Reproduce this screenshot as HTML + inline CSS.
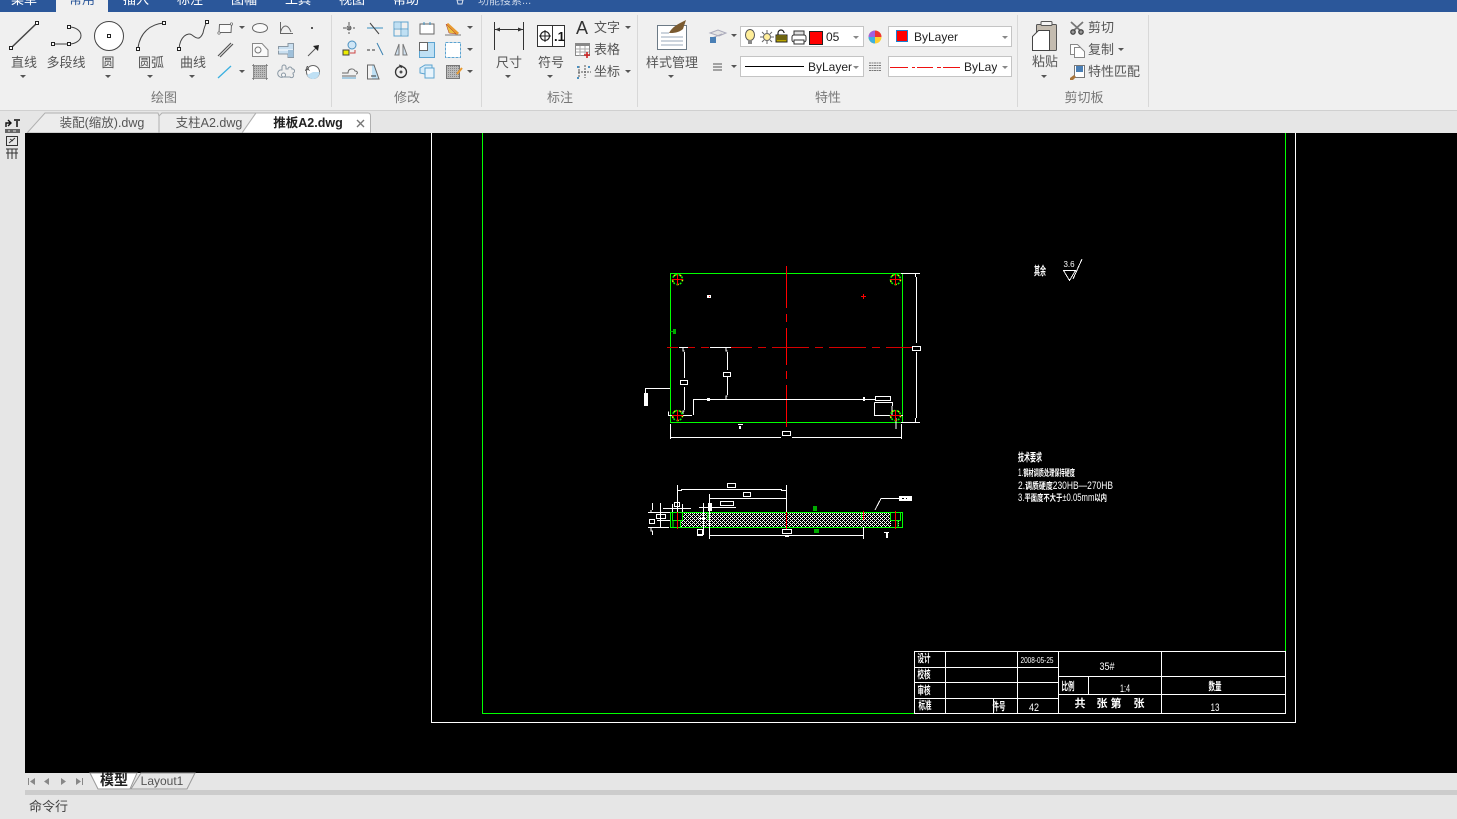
<!DOCTYPE html>
<html><head><meta charset="utf-8"><style>
html,body{margin:0;padding:0;background:#000;overflow:hidden}
svg{display:block}
text{font-family:"Liberation Sans","Noto Sans CJK SC",sans-serif}
.l{font-size:13px;fill:#555;text-anchor:middle}
.g{font-size:13px;fill:#777;text-anchor:middle}
.b{font-size:12px;fill:#222}
.m{font-size:13px;fill:#fff;text-anchor:middle}
.d{font-size:9px;fill:#fff;font-weight:bold;text-anchor:middle}
.t{font-size:9px;fill:#fff;text-anchor:middle}
.c line,.c path,.c rect.s{shape-rendering:crispEdges}
</style></head><body>
<svg width="1457" height="819" viewBox="0 0 1457 819" xmlns="http://www.w3.org/2000/svg">
<defs>
<pattern id="h" width="4" height="4" patternUnits="userSpaceOnUse"><rect width="4" height="4" fill="#000"/><path d="M0 3h1v1H0zM1 2h1v1H1zM2 1h1v1H2zM3 0h1v1H3zM0 1h1v1H0zM2 3h1v1H2z" fill="#fff"/></pattern>
<pattern id="gh" width="2" height="2" patternUnits="userSpaceOnUse"><rect width="2" height="2" fill="#bbb"/><rect width="1" height="1" fill="#888"/></pattern>
<path id="ar" d="M-3 0h6l-3 3z" fill="#555"/>
<rect id="q" x="-1.500" y="-1.500" width="3" height="3" fill="#fff" stroke="#222" stroke-width="1"/>
</defs>

<!-- base -->
<rect width="1457" height="819" fill="#e6e6e6"/>
<rect width="1457" height="12" fill="#2b579a"/>
<rect y="12" width="1457" height="98" fill="#f0f0f0"/>
<rect y="110" width="1457" height="1" fill="#d0d0d0"/>
<rect x="56" y="0" width="52" height="13" fill="#f0f0f0"/>
<!-- menu -->
<text class="m" x="24" y="4">菜单</text>
<text class="m" x="82" y="4" style="fill:#2b579a">常用</text>
<text class="m" x="136" y="4">插入</text>
<text class="m" x="190" y="4">标注</text>
<text class="m" x="244" y="4">图幅</text>
<text class="m" x="298" y="4">工具</text>
<text class="m" x="352" y="4">视图</text>
<text class="m" x="406" y="4">帮助</text>
<text x="478" y="4" style="font-size:11px;fill:#c5d2e6">功能搜索...</text>
<path d="M457 0h6l-1 4h-4z" fill="none" stroke="#dfe6f0"/>

<!-- separators -->
<g fill="#d8d8d8"><rect x="331" y="15" width="1" height="92"/><rect x="481" y="15" width="1" height="92"/><rect x="637" y="15" width="1" height="92"/><rect x="1017" y="15" width="1" height="92"/><rect x="1148" y="15" width="1" height="92"/></g>

<!-- DRAW group -->
<path d="M11 48L37 23" stroke="#444" stroke-width="1.500"/><use href="#q" x="11" y="48"/><use href="#q" x="37" y="23"/>
<path d="M53 44H69M69 27C76 27 81 31 81 35.500C81 40 76 44 69 44" fill="none" stroke="#444" stroke-width="1"/><use href="#q" x="53" y="44"/><use href="#q" x="69" y="44"/><use href="#q" x="69" y="27"/>
<circle cx="109" cy="36" r="14.500" fill="#fff" stroke="#444" stroke-width="1"/><use href="#q" x="109" y="36"/>
<path d="M138 48C140 33 150 24 164 23" fill="none" stroke="#444" stroke-width="1"/><use href="#q" x="138" y="49"/><use href="#q" x="164" y="23"/>
<path d="M179 49C180 36 188 32 192 35C197 39 200 40 203 33C204 28 205 25 207 22" fill="none" stroke="#444" stroke-width="1"/><use href="#q" x="179" y="49"/><use href="#q" x="207" y="22"/>
<text class="l" x="24" y="67">直线</text><text class="l" x="66" y="67">多段线</text><text class="l" x="108" y="67">圆</text><text class="l" x="151" y="67">圆弧</text><text class="l" x="193" y="67">曲线</text>
<use href="#ar" x="23" y="75"/><use href="#ar" x="108" y="75"/><use href="#ar" x="150" y="75"/><use href="#ar" x="192" y="75"/>
<text class="g" x="164" y="102">绘图</text>
<!-- small draw icons -->
<path d="M219.500 24.500H231.500L231 32.500H219Z" fill="#fafafa" stroke="#666"/><circle cx="219" cy="33" r="1.200" fill="#fff" stroke="#666" stroke-width=".7"/><circle cx="231.500" cy="24" r="1.200" fill="#fff" stroke="#666" stroke-width=".7"/>
<use href="#ar" x="242" y="26"/><use href="#ar" x="242" y="70"/>
<ellipse cx="260" cy="28" rx="7.500" ry="4.500" fill="#fafafa" stroke="#666"/>
<path d="M280.500 22V33.500H293M280.500 32C283 24 288 24 291 32" fill="none" stroke="#666"/>
<rect x="311" y="27" width="2" height="2" fill="#555"/>
<path d="M218 56L231 43M220 57L233 44" stroke="#555" stroke-width="1.200"/>
<path d="M252.500 43.500H262L268 50V56.500H252.500Z" fill="#fafafa" stroke="#888"/><circle cx="258" cy="50" r="3" fill="none" stroke="#777"/>
<path d="M278.500 46.500H288V43.500H293.500V57.500H288V54H278.500Z" fill="#c9dff0" stroke="#8a98a4"/><path d="M278 50H293" stroke="#fff"/><path d="M288 50H293.500V57H288Z" fill="#9fc0da"/>
<path d="M308 56L316 48" stroke="#555"/><path d="M313 46L319 45L318 51Z" fill="#222"/>
<path d="M218 78L231 66" stroke="#3ab0e0" stroke-width="1.300"/>
<rect x="254" y="66" width="12" height="12" fill="url(#gh)"/><path d="M253.500 64V80M266.500 64V80M252 65.500H268M252 78.500H268" stroke="#777" stroke-width=".8"/>
<path d="M280 70h2v-3a2 2 0 0 1 4 0v2h2a2 2 0 0 1 4 0a2 2 0 0 1 1 4v1a2 2 0 0 1-3 3h-7a3 3 0 0 1-3-7z" fill="#eee" stroke="#8a98a4"/><circle cx="283.500" cy="75" r="2" fill="#f8f8f8" stroke="#8a98a4"/>
<circle cx="313" cy="72" r="6.500" fill="#fff" stroke="#666"/><path d="M313 72H319.500A6.500 6.500 0 0 1 307 75Z" fill="#bfe0f4"/><text x="305" y="71" style="font-size:7px;fill:#333">A</text>

<!-- MODIFY group -->
<g fill="none" stroke="#555">
<path d="M349 22V34M343 28H355" stroke-dasharray="3 2"/><circle cx="349" cy="28" r="2"/>
<path d="M367 28H383" stroke="#3a8fc0"/><path d="M370 23L379 34" stroke="#444"/>
<path d="M394 22h14v14h-14zM401 22v14M394 29h14" stroke="#5ba3d0"/><rect x="395" y="23" width="5" height="5" fill="#bfe0f4" stroke="none"/><rect x="402" y="30" width="5" height="5" fill="#bfe0f4" stroke="none"/>
<rect x="420" y="24" width="14" height="10" fill="#fff" stroke="#666"/><path d="M424 22v3M430 22v3" stroke="#3a8fc0"/>
<path d="M447 24L458 34" stroke="#e89a30" stroke-width="3"/><path d="M446 24l3 9 7 1z" fill="#e8c040" stroke="#a33" stroke-width=".5"/><path d="M445 35H461" stroke="#777"/>
<circle cx="352" cy="45" r="4" fill="#cfe6f6" stroke="#4a90c0"/><rect x="343" y="50" width="6" height="5" fill="#ee0" stroke="#444"/><path d="M350 53h5v-3" stroke="#c44"/>
<path d="M367 50H377" stroke-dasharray="3 2" stroke="#333"/><path d="M377 43L383 55" stroke="#3a80b0"/>
<path d="M399 44l-4 11h4zM403 44l4 11h-4z" fill="#cfe0ef" stroke="#777"/>
<rect x="419.500" y="42.500" width="15" height="15" fill="#bfe0f4" stroke="#5ba3d0"/><rect x="419.500" y="42.500" width="8" height="8" fill="#fff" stroke="#666"/>
<rect x="445.500" y="42.500" width="15" height="15" fill="#fff" stroke="#5ba3d0" stroke-dasharray="3 1"/>
<path d="M342 76H356M342 73H348C348 68 354 68 355 71C358 71 358 74 356 74" stroke="#666"/><path d="M342 78H356" stroke="#5ba3d0"/>
<path d="M367.500 65H374L379 79H367.500Z" fill="#bfe0f4" stroke="#666"/><path d="M368 65.500H372V78.500H368Z" fill="#f4f4f4" stroke="none"/><path d="M371 76H376" stroke="#333"/>
<circle cx="401" cy="72" r="5.500" stroke="#333" stroke-width="1.300"/><circle cx="401" cy="72" r="1" fill="#333"/><path d="M399 65l3 1-1 2" stroke="#333"/>
<path d="M420 68l5-3h7v9h-7l-5-1z" fill="#d8ecf8" stroke="#5ba3d0"/><rect x="425" y="68" width="9" height="10" fill="#e8f4fc" stroke="#5ba3d0"/>
<rect x="446.500" y="65.500" width="13" height="13" fill="url(#gh)" stroke="#777"/><path d="M457 74l5-6" stroke="#e89a30" stroke-width="2"/>
</g>
<use href="#ar" x="470" y="26"/><use href="#ar" x="470" y="48"/><use href="#ar" x="470" y="70"/>
<text class="g" x="407" y="102">修改</text>

<!-- ANNOTATION -->
<path d="M494.500 22V50M523.500 22V50M495 29.500H523" stroke="#333" fill="none"/><path d="M495 29.500l5-2v4zM523 29.500l-5-2v4z" fill="#333"/>
<text class="l" x="509" y="67">尺寸</text><use href="#ar" x="508" y="75"/>
<rect x="537.500" y="25.500" width="27" height="21" fill="#fff" stroke="#333"/><path d="M552.500 26V46" stroke="#333"/><circle cx="545" cy="36" r="4.500" fill="none" stroke="#222" stroke-width="1.200"/><path d="M539 36H551M545 30V42" stroke="#222"/><text x="554" y="41" style="font-size:13px;font-weight:bold;fill:#111">.1</text>
<text class="l" x="551" y="67">符号</text><use href="#ar" x="550" y="75"/>
<text x="576" y="34" style="font-size:18px;fill:#333">A</text><text class="l" x="607" y="32" style="font-size:13px">文字</text><use href="#ar" x="628" y="26"/>
<rect x="575.500" y="43.500" width="14" height="12" fill="#fff" stroke="#888"/><rect x="575" y="43" width="15" height="3" fill="#888"/><path d="M580 46V56M585 46V56M576 49H589M576 52H589" stroke="#aaa"/><path d="M587 52V58M584 55H590" stroke="#c22" stroke-width="1.600"/>
<text class="l" x="607" y="54">表格</text>
<path d="M579 66v12M585 65v13M578 72h13" stroke="#555" stroke-dasharray="2 1" fill="none"/><g fill="#4a90c0"><rect x="577" y="66" width="2" height="2"/><rect x="588" y="66" width="2" height="2"/><rect x="577" y="77" width="2" height="2"/></g>
<text class="l" x="607" y="76">坐标</text><use href="#ar" x="628" y="70"/>
<text class="g" x="560" y="102">标注</text>

<!-- PROPERTIES -->
<rect x="657.500" y="25.500" width="29" height="24" fill="#fff" stroke="#6c7a86"/>
<path d="M661 33h8M661 37h22M661 41h22M661 45h22" stroke="#9ab"/>
<path d="M669 33C672 27 678 24 686 20L683 29C678 33 674 33 669 33Z" fill="#7a5a30"/>
<text class="l" x="672" y="67">样式管理</text><use href="#ar" x="671" y="75"/>
<path d="M710 33l8-3 8 3-7 3zM712 38l10-4" fill="#e4e4e4" stroke="#aab"/><rect x="710" y="37" width="6" height="6" fill="#4a7fb5"/>
<use href="#ar" x="734" y="34"/>
<path d="M713 64h9M713 67h9M713 70h9" stroke="#555" stroke-width="1"/>
<use href="#ar" x="734" y="65"/>
<rect x="740.500" y="26.500" width="123" height="20" fill="#fff" stroke="#c4c4c4"/>
<ellipse cx="750" cy="35" rx="4.500" ry="5.500" fill="#ffee99" stroke="#555"/><rect x="748" y="40" width="4" height="4" fill="#888"/>
<circle cx="767" cy="37" r="3.500" fill="#ffee99" stroke="#666"/><path d="M767 30v3M767 41v3M760 37h3M771 37h3M762 32l2 2M772 32l-2 2M762 42l2-2M772 42l-2-2" stroke="#666"/>
<rect x="776" y="35" width="11" height="7" fill="#bba600" stroke="#222"/><path d="M778 35v-2a3 3 0 0 1 6 0v-1" fill="none" stroke="#222" stroke-width="1.200"/><path d="M777 37h9M777 39h9" stroke="#222"/>
<rect x="792" y="35" width="14" height="7" rx="2" fill="#fff" stroke="#333"/><rect x="794" y="31" width="10" height="4" fill="#ddd" stroke="#333"/><rect x="794" y="40" width="10" height="4" fill="#fff" stroke="#333"/>
<rect x="809.500" y="31.500" width="13" height="13" fill="#f00" stroke="#222"/>
<text class="b" x="826" y="41" style="font-size:12px">05</text><path d="M853 36h6l-3 3z" fill="#888"/>
<circle cx="875" cy="37" r="6.500" fill="#ffd030"/><path d="M875 37V30.500A6.500 6.500 0 0 1 881.500 37Z" fill="#e33"/><path d="M875 37H868.500A6.500 6.500 0 0 1 875 30.500Z" fill="#a060e0"/><path d="M875 37V43.500A6.500 6.500 0 0 1 868.500 37Z" fill="#3cb0e0"/>
<rect x="888.500" y="26.500" width="123" height="20" fill="#fff" stroke="#c4c4c4"/><rect x="896.500" y="30.500" width="11" height="11" fill="#f00" stroke="#1a7fd0"/><text class="b" x="914" y="41">ByLayer</text><path d="M1002 36h6l-3 3z" fill="#888"/>
<rect x="740.500" y="56.500" width="123" height="20" fill="#fff" stroke="#c4c4c4"/><path d="M745 66.500H804" stroke="#000"/><text class="b" x="808" y="71">ByLayer</text><path d="M853 66h6l-3 3z" fill="#888"/>
<path d="M869 63h12M869 65.500h12M869 68h12M869 70.500h12" stroke="#777" stroke-dasharray="2 .5"/>
<rect x="888.500" y="56.500" width="123" height="20" fill="#fff" stroke="#c4c4c4"/><rect x="890" y="67" width="18" height="1" fill="#e11"/><rect x="912" y="67" width="3" height="1" fill="#e11"/><rect x="917" y="67" width="16" height="1" fill="#e11"/><rect x="937" y="67" width="4" height="1" fill="#e11"/><rect x="943" y="67" width="17" height="1" fill="#e11"/>
<svg x="964" y="56" width="33" height="20"><text class="b" x="0" y="15">ByLayer</text></svg><path d="M1002 66h6l-3 3z" fill="#888"/>
<text class="g" x="828" y="102">特性</text>

<!-- CLIPBOARD -->
<rect x="1036.500" y="24.500" width="20" height="26" rx="1" fill="#c4bcb0" stroke="#555"/><rect x="1041" y="21.500" width="11" height="4" rx="1" fill="#f4f4f4" stroke="#555"/>
<path d="M1032.500 36.500L1038.500 30.500H1049.500V50.500H1032.500Z" fill="#fff" stroke="#444"/>
<text class="l" x="1045" y="66">粘贴</text><use href="#ar" x="1044" y="75"/>
<path d="M1071 22L1083 33M1083 22L1071 33" stroke="#777" stroke-width="1.800"/><circle cx="1073" cy="32" r="2.200" fill="#999" stroke="#444" stroke-width="1.300"/><circle cx="1081" cy="32" r="2.200" fill="#999" stroke="#444" stroke-width="1.300"/>
<text class="l" x="1101" y="32">剪切</text>
<path d="M1070.500 44.500h7l3 3V54.500h-10z" fill="#fff" stroke="#888"/><path d="M1074.500 47.500h6l4 4V57.500h-10z" fill="#fff" stroke="#888"/>
<text class="l" x="1101" y="54">复制</text><use href="#ar" x="1121" y="48"/>
<rect x="1074.500" y="65.500" width="10" height="12" fill="#fff" stroke="#777"/><rect x="1076" y="66" width="7" height="6" fill="#4a7fb5"/><path d="M1070 78l4-3 2 2-3 3h-3z" fill="#a8743a"/>
<text class="l" x="1114" y="76">特性匹配</text>
<text class="g" x="1084" y="102">剪切板</text>

<!-- file tabs -->
<path d="M27 133L45 113H158L159 116V133Z" fill="#ececec" stroke="#b0b0b0"/>
<path d="M159 133V116L162 113H256L242 133Z" fill="#ececec" stroke="#b0b0b0"/>
<path d="M242 133L256 113H368Q370.500 113 370.500 116V133Z" fill="#fff" stroke="#b0b0b0"/>
<text x="102" y="127" style="font-size:12.500px;fill:#555;text-anchor:middle">装配(缩放).dwg</text>
<text x="209" y="127" style="font-size:12.500px;fill:#555;text-anchor:middle">支柱A2.dwg</text>
<text x="308" y="127" style="font-size:12.500px;fill:#222;font-weight:bold;text-anchor:middle">推板A2.dwg</text>
<path d="M357 120L364 127M364 120L357 127" stroke="#777" stroke-width="1.400"/>

<!-- left strip -->
<path d="M6 127V123h4M8 120l3 3-3 3" fill="none" stroke="#111" stroke-width="1.400"/><path d="M14 120h6M17 120v7" stroke="#444" stroke-width="2"/>
<rect x="5" y="129" width="15" height="4" fill="#666"/><path d="M8 131h2M13 131h3" stroke="#ddd"/>
<rect x="6.500" y="136.500" width="11" height="9" fill="none" stroke="#333"/><path d="M9 143l6-5M10 139l3 2" stroke="#333"/>
<path d="M6 149h12M8 149v10M12 149v10M16 149v10M6 153h12" stroke="#333" fill="none"/>

<!-- canvas -->
<g class="c">
<rect x="25" y="133" width="1432" height="640" fill="#000"/>
<g fill="none">
<path d="M431.500 133V722.500H1295.500V133" stroke="#fff"/>
<path d="M482.500 133V713.500H914" stroke="#0f0"/>
<path d="M1285.500 133V651" stroke="#0f0"/>
<!-- plan -->
<rect x="670.500" y="273.500" width="232" height="149" stroke="#0f0"/>
<path d="M786.500 266V308M786.500 314V322M786.500 328V365M786.500 371V379M786.500 385V427" stroke="#f00"/>
<path d="M667 347.500H678M688 347.500H695M701 347.500H709M731 347.500H752M758 347.500H766M772 347.500H809M815 347.500H823M829 347.500H866M872 347.500H880M886 347.500H912" stroke="#d40000"/>
<path d="M679 347.500H688M710 347.500H731M684.500 352V378M684.500 387V410M727.500 352V370M727.500 377V395M683 348V351H684.500M726 348V351H727.500M726 399V396H727.500M683 414V411H684.500" stroke="#fff"/>
<path d="M693.500 415V399.500H875M668 415.500H692M668.500 411.500V415" stroke="#fff"/>
<path d="M901 273.500H920M916.500 277V343M916.500 352V418M915.500 274V277M915.500 418V422M920 422.500H901M670.500 424V439M901.500 424V439M670.500 437.500H781M792 437.500H901.500" stroke="#fff"/>
<path d="M645.500 393V388.500H670" stroke="#fff"/>
<path d="M874.500 402.500H892.500V406M874.500 402.500V415.500H903M892 406V415M896 418V429" stroke="#fff"/>
<rect x="680.500" y="380.500" width="7" height="4" stroke="#fff"/>
<rect x="723.500" y="372.500" width="7" height="4" stroke="#fff"/>
<rect x="875.500" y="396.500" width="15" height="4" stroke="#fff"/>
<rect x="912.500" y="346.500" width="8" height="4" stroke="#fff"/>
<rect x="782.500" y="431.500" width="8" height="4" stroke="#fff"/>
</g>
<rect x="644" y="393" width="4" height="13" fill="#fff"/>
<g fill="none" stroke-width="1.500">
<g stroke="#0f0" stroke-dasharray="2 1.500"><circle cx="677.500" cy="279.500" r="5"/><circle cx="895.500" cy="279.500" r="5"/><circle cx="677.500" cy="415.500" r="5"/><circle cx="895.500" cy="415.500" r="5"/></g>
<g stroke="#ee0" stroke-dasharray="1.500 5"><circle cx="677.500" cy="279.500" r="5"/><circle cx="895.500" cy="279.500" r="5"/><circle cx="677.500" cy="415.500" r="5"/><circle cx="895.500" cy="415.500" r="5"/></g>
<path d="M677.500 274V285M672 279.500H683M895.500 274V285M890 279.500H901M677.500 410V421M672 415.500H683M895.500 410V421M890 415.500H901" stroke="#f00" stroke-width="1"/>
</g>
<g fill="#fff"><rect x="707" y="295" width="4" height="3"/><rect x="707" y="398" width="3" height="3"/><rect x="863" y="397" width="2" height="4"/><rect x="739" y="426" width="2" height="3"/><rect x="738" y="424" width="5" height="1"/></g>
<g fill="#f00"><rect x="709" y="296" width="1" height="1"/><rect x="861" y="296" width="5" height="1"/><rect x="863" y="294" width="1" height="5"/></g>
<rect x="673" y="329" width="3" height="5" fill="#0a0"/><rect x="670" y="331" width="3" height="1" fill="#0a0"/>
<!-- section -->
<rect x="671" y="512" width="231" height="15" fill="url(#h)"/>
<path d="M670.500 512.500H902.500V527.500H670.500Z" fill="none" stroke="#0f0"/>
<rect x="671" y="513" width="11" height="7" fill="#000"/><rect x="671" y="520" width="9" height="7" fill="#000"/><rect x="891" y="513" width="11" height="7" fill="#000"/><rect x="891" y="520" width="7" height="7" fill="#000"/><rect x="899" y="520" width="3" height="7" fill="#000"/>
<path d="M672.500 512V520.500H682.500V512M680.500 520V527M708 512V520M861.500 512V520M890.500 513V520.500H900.500V513M898 521V527M673 520V527" fill="none" stroke="#0f0"/>
<path d="M677.500 511V529M895.500 511V529M786.500 511V529M863.500 511V520" fill="none" stroke="#f00"/>
<g fill="none" stroke="#fff">
<path d="M677.500 485V512M786.500 485V512M678 490.500H681.500V489.500H781.500V490.500H786M709.500 494V539M710 498.500H786M863.500 527V539M710 535.500H863"/>
<path d="M652.500 503V510M651 510V512M648 512.500H670M660.500 503V528M657 520.500H670M648 527.500H669M651 528V531H652.500V535M672.500 504V512M682.500 504V512M663 508.500H691M703.500 503V535M699 507.500H736M708.500 503V511M699 518.500H706M697 535.500H703"/>
<path d="M875 510L881 498.500H900"/>
<rect x="727.500" y="483.500" width="8" height="4"/>
<rect x="743.500" y="492.500" width="7" height="4"/>
<rect x="720.500" y="501.500" width="13" height="4"/>
<rect x="674.500" y="502.500" width="5" height="4"/>
<rect x="656.500" y="514.500" width="9" height="4"/>
<rect x="649.500" y="519.500" width="5" height="4"/>
<rect x="697.500" y="529.500" width="5" height="5"/>
<rect x="782.500" y="529.500" width="9" height="4"/>
</g>
<rect x="710" y="503" width="2" height="8" fill="#fff"/>
<rect x="899" y="496" width="13" height="5" fill="#fff"/><rect x="902" y="498" width="2" height="1" fill="#000"/><rect x="906" y="498" width="1" height="1" fill="#000"/>
<rect x="785" y="535" width="4" height="2" fill="#fff"/><rect x="886" y="533" width="2" height="5" fill="#fff"/><rect x="884" y="532" width="5" height="1" fill="#fff"/>
<rect x="813" y="506" width="4" height="5" fill="#0a0"/><rect x="814" y="529" width="5" height="4" fill="#0a0"/>
<!-- title block -->
<g fill="none" stroke="#fff">
<rect x="914.500" y="651.500" width="371" height="62"/>
<path d="M945.500 651V713M1017.500 651V713M1058.500 651V713M1161.500 651V713M914 667.500H1058M914 682.500H1058M914 698.500H1058M1058 676.500H1285M1058 694.500H1285M1088.500 676V694M993.500 698V713"/>
</g>
<path d="M1063.500 270.500H1075.500L1069.500 280.500ZM1073 279L1082 259" fill="none" stroke="#fff"/>
</g>

<!-- drawing text -->
<text class="d" x="924" y="662" style="font-size:11px" textLength="13" lengthAdjust="spacingAndGlyphs">设计</text>
<text class="d" x="924" y="678" style="font-size:11px" textLength="13" lengthAdjust="spacingAndGlyphs">校核</text>
<text class="d" x="924" y="694" style="font-size:11px" textLength="13" lengthAdjust="spacingAndGlyphs">审核</text>
<text class="d" x="925" y="709" style="font-size:11px" textLength="13" lengthAdjust="spacingAndGlyphs">标准</text>
<text class="d" x="999" y="710" style="font-size:11px" textLength="13" lengthAdjust="spacingAndGlyphs">件号</text>
<text class="t" x="1037" y="663" style="font-size:8px" textLength="33" lengthAdjust="spacingAndGlyphs">2008-05-25</text>
<text class="t" x="1034" y="711" style="font-size:11px" textLength="10" lengthAdjust="spacingAndGlyphs">42</text>
<text class="t" x="1107" y="670" style="font-size:11px" textLength="15" lengthAdjust="spacingAndGlyphs">35#</text>
<text class="d" x="1068" y="690" style="font-size:11px" textLength="13" lengthAdjust="spacingAndGlyphs">比例</text>
<text class="t" x="1125" y="692" style="font-size:11px" textLength="10" lengthAdjust="spacingAndGlyphs">1:4</text>
<text class="d" x="1215" y="690" style="font-size:11px" textLength="13" lengthAdjust="spacingAndGlyphs">数量</text>
<text class="d" x="1080" y="707" style="font-size:11px">共</text><text class="d" x="1102" y="707" style="font-size:11px">张</text><text class="d" x="1116" y="707" style="font-size:11px">第</text><text class="d" x="1139" y="707" style="font-size:11px">张</text>
<text class="t" x="1215" y="711" style="font-size:11px" textLength="9" lengthAdjust="spacingAndGlyphs">13</text>
<text class="d" x="1040" y="275" style="font-size:12px" textLength="12" lengthAdjust="spacingAndGlyphs">其余</text>
<text class="t" x="1069" y="267" style="font-size:8px">3.6</text>
<text class="d" x="1030" y="461" style="font-size:11px" textLength="24" lengthAdjust="spacingAndGlyphs">技术要求</text>
<text x="1018" y="476" style="font-size:11px;fill:#fff" textLength="57" lengthAdjust="spacingAndGlyphs">1.<tspan style="font-size:9px;font-weight:bold">钢材调质处理保持硬度</tspan></text>
<text x="1018" y="489" style="font-size:11px;fill:#fff" textLength="95" lengthAdjust="spacingAndGlyphs">2.<tspan style="font-size:9px;font-weight:bold">调质硬度</tspan>230HB—270HB</text>
<text x="1018" y="501" style="font-size:11px;fill:#fff" textLength="89" lengthAdjust="spacingAndGlyphs">3.<tspan style="font-size:9px;font-weight:bold">平面度不大于</tspan>±0.05mm<tspan style="font-size:9px;font-weight:bold">以内</tspan></text>

<!-- layout tabs -->
<rect x="25" y="773" width="1432" height="17" fill="#e6e6e6"/>
<rect x="25" y="790" width="1432" height="5" fill="#cccccc"/>
<g fill="#888"><path d="M28 778v7h1v-7zM35 778v7l-5-3.500zM49 778v7l-5-3.500zM61 778v7l5-3.500zM76 778v7l5-3.500zM82 778v7h1v-7z"/></g>
<path d="M90 773L98 789H130L137 773Z" fill="#fff" stroke="#999"/>
<path d="M131 789L141 773H195L187 789Z" fill="#e6e6e6" stroke="#999"/>
<text x="114" y="785" style="font-size:14px;font-weight:bold;fill:#222;text-anchor:middle">模型</text>
<text x="162" y="785" style="font-size:12px;fill:#555;text-anchor:middle">Layout1</text>
<text x="29" y="811" style="font-size:13px;fill:#444">命令行</text>
</svg>
</body></html>
